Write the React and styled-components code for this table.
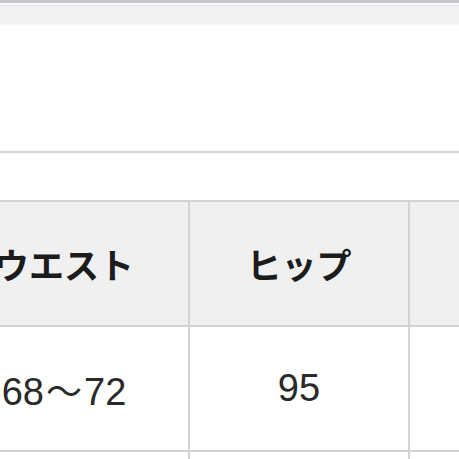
import React from "react";
import styled, { createGlobalStyle } from "styled-components";

const GlobalStyle = createGlobalStyle`
  html, body {
    margin: 0;
    padding: 0;
    background: #ffffff;
    overflow: hidden;
  }
  body {
    font-family: "Liberation Sans", "Noto Sans CJK JP", sans-serif;
  }
`;

const Page = styled.div`
  width: 459px;
  height: 459px;
  overflow: hidden;
  background: #ffffff;
`;

const TopBar = styled.div`
  height: 3px;
  background: #c7c7cb;
  border-bottom: 2px solid #fbfbfd;
`;

const SubBar = styled.div`
  height: 20px;
  border-top: 1px solid #e6e6ec;
  background: linear-gradient(#f2f2f2 0%, #f2f2f2 85%, #ffffff 100%);
`;

const Blank = styled.div`
  height: ${p => p.h}px;
`;

const Divider = styled.div`
  height: 2px;
  background: #d3d3d3;
`;

const Table = styled.table`
  border-collapse: collapse;
  margin-left: -62px;
  table-layout: fixed;
  width: 560px;
`;

const Cell = styled.td`
  border: 2px solid #d3d3d3;
  text-align: center;
  padding: 0;
  height: ${p => p.h}px;
  background: ${p => (p.head ? "#f0f0f0" : "#ffffff")};
  color: ${p => (p.head ? "#1c1c1c" : "#2a2a2a")};
  font-family: ${p =>
    p.head
      ? `"Noto Sans CJK JP", sans-serif`
      : `"Liberation Sans", "Noto Sans CJK JP", sans-serif`};
  font-size: ${p => (p.head ? 35 : 38)}px;
  font-weight: ${p => (p.head ? 700 : 400)};
  white-space: nowrap;
`;

const Tilde = styled.span`
  font-family: "Noto Sans CJK JP", sans-serif;
  font-size: 36px;
  margin: 0 2px;
`;

const rows = [
  { h: 123, head: true, cells: ["ウエスト", "ヒップ", ""] },
  { h: 123, head: false, cells: [["68", "72"], "95", ""] },
  { h: 60, head: false, cells: ["", "", ""] }
];

export default function App() {
  return (
    <Page>
      <GlobalStyle />
      <TopBar />
      <SubBar />
      <Blank h={125} />
      <Divider />
      <Blank h={47} />
      <Table>
        <colgroup>
          <col style={{ width: 250 }} />
          <col style={{ width: 220 }} />
          <col style={{ width: 90 }} />
        </colgroup>
        <tbody>
          {rows.map((row, i) => (
            <tr key={i}>
              {row.cells.map((c, j) => (
                <Cell key={j} h={row.h} head={row.head}>
                  {Array.isArray(c) ? (
                    <>
                      {c[0]}
                      <Tilde>～</Tilde>
                      {c[1]}
                    </>
                  ) : (
                    c
                  )}
                </Cell>
              ))}
            </tr>
          ))}
        </tbody>
      </Table>
    </Page>
  );
}
